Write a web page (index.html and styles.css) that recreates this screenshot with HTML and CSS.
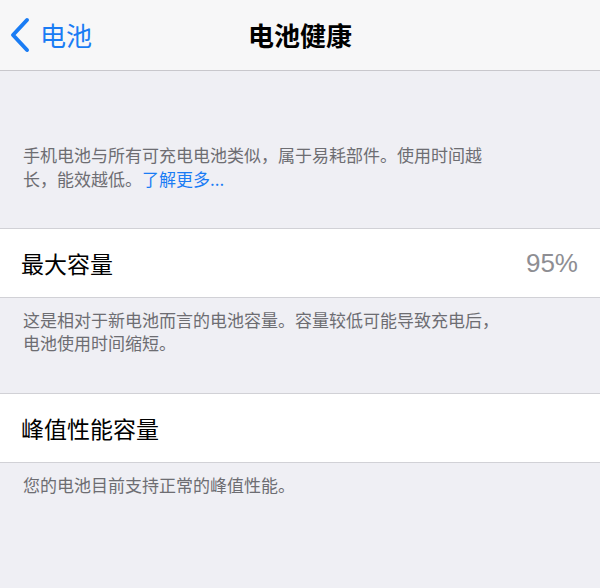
FILE: index.html
```html
<!DOCTYPE html>
<html lang="zh-CN">
<head>
<meta charset="utf-8">
<title>电池健康</title>
<link rel="stylesheet" href="styles.css">
</head>
<body>
<header class="nav">
  <a class="nav-back" href="#">
    <svg class="chevron" width="22" height="36" viewBox="0 0 22 36" aria-hidden="true">
      <path d="M17 3 L3 18 L17 33" fill="none" stroke="#1a7cf4" stroke-width="4" stroke-linecap="round" stroke-linejoin="round"/>
    </svg>
    <span>电池</span>
  </a>
  <h1 class="nav-title">电池健康</h1>
  <div class="nav-spacer"></div>
</header>

<main class="content">
  <p class="footer footer-first">手机电池与所有可充电电池类似，属于易耗部件。使用时间越长，能效越低。<a class="link" href="#">了解更多...</a></p>

  <section class="cell">
    <span class="cell-label">最大容量</span>
    <span class="cell-value">95%</span>
  </section>
  <p class="footer">这是相对于新电池而言的电池容量。容量较低可能导致充电后，电池使用时间缩短。</p>

  <section class="cell cell-second">
    <span class="cell-label">峰值性能容量</span>
  </section>
  <p class="footer">您的电池目前支持正常的峰值性能。</p>
</main>
</body>
</html>
```

FILE: styles.css
```css
html, body {
  margin: 0;
  padding: 0;
}

body {
  background: #efeff4;
  font-family: "Noto Sans CJK SC", "Noto Sans", sans-serif;
  width: 600px;
  height: 588px;
  overflow: hidden;
}

.nav {
  display: grid;
  grid-template-columns: 1fr auto 1fr;
  align-items: center;
  height: 70px;
  background: #f7f7f8;
  border-bottom: 1px solid #c8c7cc;
}

.nav-back {
  display: flex;
  align-items: center;
  padding-left: 10px;
  color: #1a7cf4;
  text-decoration: none;
  font-size: 26px;
  line-height: 1;
}

.chevron {
  margin-right: 8px;
}

.nav-title {
  margin: 0;
  font-size: 26px;
  font-weight: 600;
  color: #000;
  line-height: 1;
}

.footer {
  margin: 0;
  padding: 10px 23px 0;
  max-width: 480px;
  font-size: 17px;
  line-height: 23px;
  color: #6d6d72;
}

.footer-first {
  padding-top: 72px;
  padding-bottom: 37px;
  line-height: 24px;
}

.link {
  color: #1a7cf4;
  text-decoration: none;
}

.cell {
  display: flex;
  align-items: center;
  justify-content: space-between;
  height: 68px;
  padding: 0 22px 0 21px;
  background: #fff;
  border-top: 1px solid #d1d1d6;
  border-bottom: 1px solid #d1d1d6;
}

.cell-second {
  margin-top: 39px;
}

.cell-label {
  font-size: 23px;
  color: #000;
}

.cell-value {
  font-family: "Liberation Sans", Arial, sans-serif;
  font-size: 26px;
  color: #8e8e93;
}
```
